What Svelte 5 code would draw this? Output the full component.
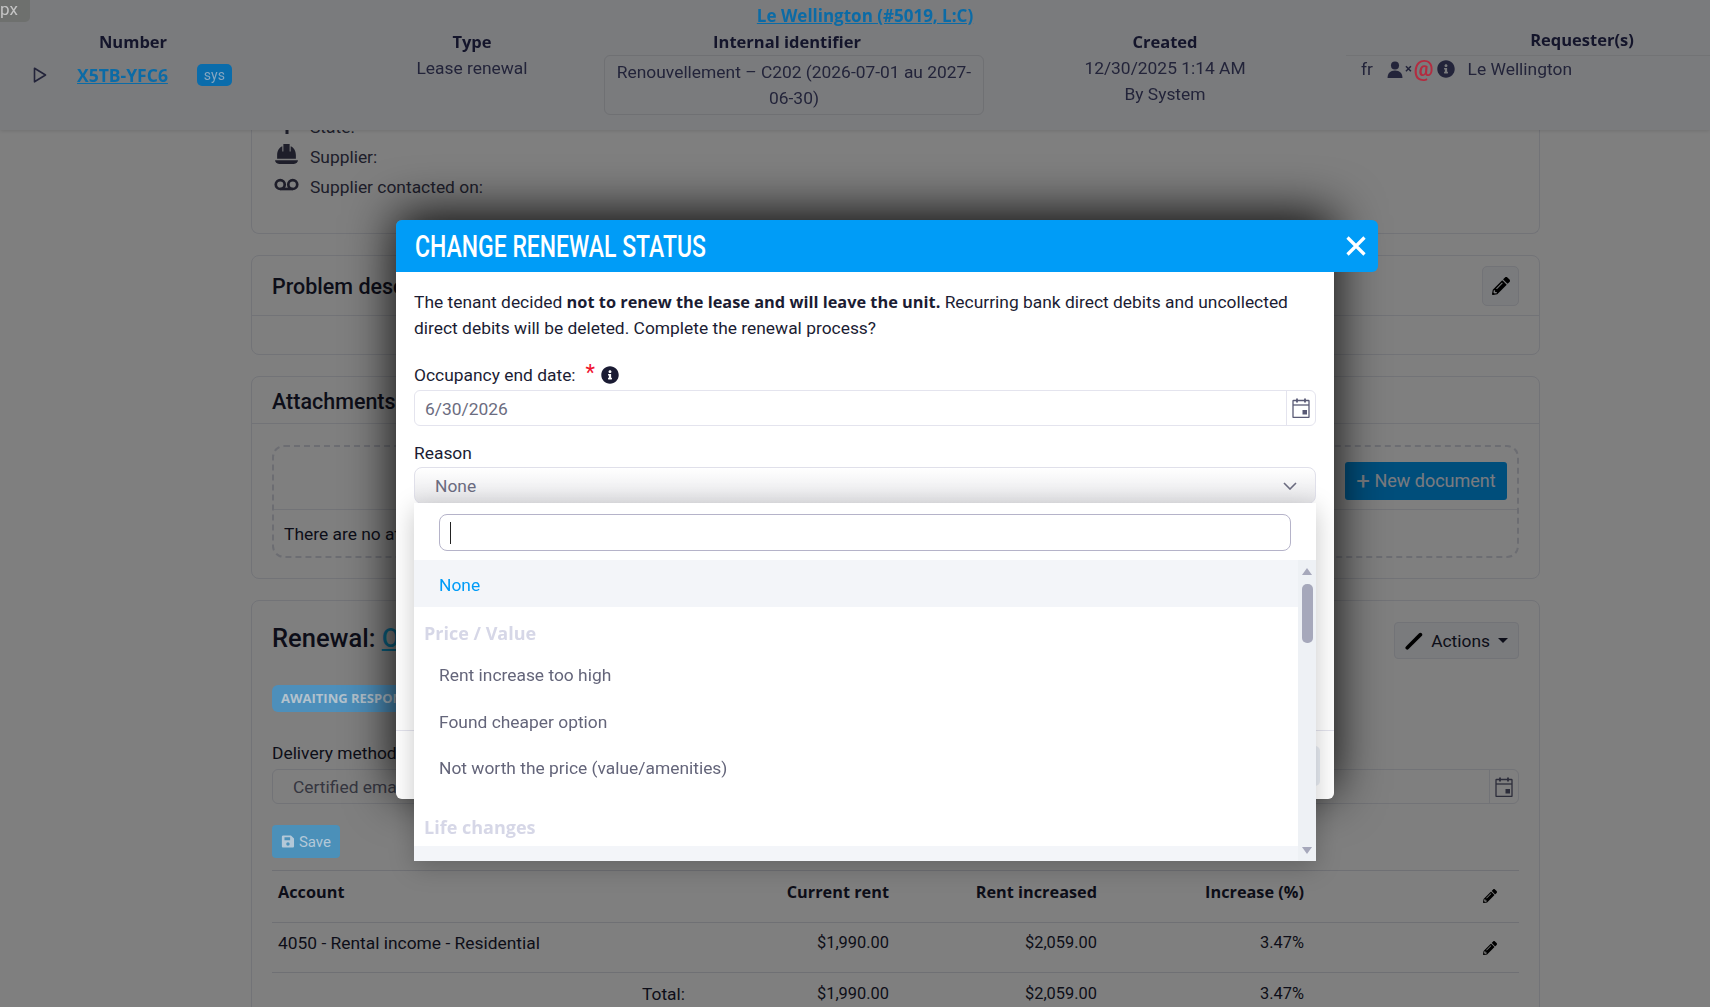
<script>
  const pencil = "M497.9 142.1l-46.1 46.1c-4.7 4.7-12.3 4.7-17 0l-111-111c-4.7-4.7-4.7-12.3 0-17l46.1-46.1c18.7-18.7 49.1-18.7 67.9 0l60.1 60.1c18.8 18.7 18.8 49.1 0 67.9zM284.2 99.8L21.6 362.4.4 483.9c-2.9 16.4 11.4 30.6 27.8 27.8l121.5-21.3 262.6-262.6c4.7-4.7 4.7-12.3 0-17l-111-111c-4.8-4.7-12.4-4.7-17.1 0zM124.1 339.9c-5.5-5.5-5.5-14.3 0-19.8l154-154c5.5-5.5 14.3-5.5 19.8 0s5.5 14.3 0 19.8l-154 154c-5.5 5.5-14.3 5.5-19.8 0zM88 424h48v36.3l-64.5 11.3-31.1-31.1L51.7 376H88v48z";
  const info = "M256 8C119.043 8 8 119.083 8 256c0 136.997 111.043 248 248 248s248-111.003 248-248C504 119.083 392.957 8 256 8zm0 110c23.196 0 42 18.804 42 42s-18.804 42-42 42-42-18.804-42-42 18.804-42 42-42zm56 254c0 6.627-5.373 12-12 12h-88c-6.627 0-12-5.373-12-12v-24c0-6.627 5.373-12 12-12h12v-64h-12c-6.627 0-12-5.373-12-12v-24c0-6.627 5.373-12 12-12h64c6.627 0 12 5.373 12 12v100h12c6.627 0 12 5.373 12 12v24z";
  const priceItems = ['Rent increase too high', 'Found cheaper option', 'Not worth the price (value/amenities)'];
</script>

{#snippet calendar()}
  <svg class="cal" viewBox="0 0 18 20" width="18" height="20" fill="none" stroke="currentColor" stroke-width="1.300">
    <rect x="1" y="2.500" width="16" height="17" rx="0.500" />
    <path d="M1 7h16" />
    <path d="M5 .5v4M13 .5v4" stroke-width="1.800" />
    <rect x="10.500" y="12" width="4.500" height="4.500" fill="currentColor" stroke="none" />
  </svg>
{/snippet}

{#snippet pencilIcon(size)}
  <svg viewBox="0 0 512 512" width={size} height={size} fill="currentColor"><path d={pencil} /></svg>
{/snippet}

<div class="page">
  <main class="content">
    <section class="card first">
      <div class="meta"><span class="meta-icon"><svg viewBox="0 0 24 24" width="24" height="24" fill="currentColor"><rect x="10.500" y="2" width="3" height="20" /></svg></span>State:</div>
      <div class="meta"><span class="meta-icon"><svg viewBox="0 0 24 22" width="25" height="23" fill="currentColor"><path d="M9 1h6v7h1V3c3 1.300 5 4.400 5 8.500V15H3v-3.500C3 7.400 5 4.300 8 3v5h1zM1 16.500h22c0 1.600-1.500 3.500-4 3.500H5c-2.500 0-4-1.900-4-3.500z" /></svg></span>Supplier:</div>
      <div class="meta"><span class="meta-icon"><svg viewBox="0 0 24 14" width="25" height="15" fill="none" stroke="currentColor" stroke-width="2.600"><circle cx="6" cy="7" r="4.300" /><circle cx="18" cy="7" r="4.300" /><path d="M6 11.300h12" /></svg></span>Supplier contacted on:</div>
    </section>

    <section class="card problem">
      <header class="card-head tall">
        <h3>Problem description</h3>
        <button class="icon-btn">{@render pencilIcon(18)}</button>
      </header>
    </section>

    <section class="card attachments">
      <header class="card-head"><h3>Attachments</h3></header>
      <div class="dropzone">
        <div class="drop-top">
          <button class="primary"><span class="plus">+</span> New document</button>
        </div>
        <div class="drop-text">There are no attachments</div>
      </div>
    </section>

    <section class="card renewal">
      <div class="renewal-head">
        <h2>Renewal: <a href="#top">Ongoing</a></h2>
        <button class="actions">
          <svg viewBox="0 0 20 20" width="20" height="20" fill="none" stroke="#000" stroke-width="4" stroke-linecap="round"><path d="M2.500 17.500 17 3" /></svg>
          Actions <i class="caret"></i>
        </button>
      </div>
      <span class="status">AWAITING RESPONSE</span>
      <div class="delivery">
        <div class="delivery-col">
          <label for="delivery">Delivery method</label>
          <input id="delivery" class="bg-input" value="Certified email" />
        </div>
        <div class="date-col">
          <div class="date-box"><span class="date-addon">{@render calendar()}</span></div>
        </div>
      </div>
      <button class="save">
        <svg viewBox="0 0 16 16" width="15" height="15" fill="currentColor"><path d="M1 2.500C1 1.700 1.700 1 2.500 1h9L15 4.500v9c0 .8-.7 1.500-1.500 1.500h-11C1.700 15 1 14.300 1 13.500zM4 3v3.500h6.500V3zm4 6a2 2 0 1 0 0 4 2 2 0 0 0 0-4z" fill-rule="evenodd" /></svg>
        Save
      </button>
      <div class="rent-table">
        <div class="rent-row head">
          <span>Account</span><span class="num">Current rent</span><span class="num">Rent increased</span><span class="num">Increase (%)</span>
          <span class="edit">{@render pencilIcon(14)}</span>
        </div>
        <div class="rent-row middle">
          <span>4050 - Rental income - Residential</span><span class="num">$1,990.00</span><span class="num">$2,059.00</span><span class="num">3.47%</span>
          <span class="edit">{@render pencilIcon(14)}</span>
        </div>
        <div class="rent-row">
          <span class="total">Total:</span><span class="num">$1,990.00</span><span class="num">$2,059.00</span><span class="num">3.47%</span>
        </div>
      </div>
    </section>
  </main>

  <header class="topbar">
    <div class="company"><a href="#top">Le Wellington (#5019, L:C)</a></div>
    <div class="cols">
      <div class="col">
        <div class="th">Number</div>
        <div class="number">
          <svg viewBox="0 0 14 16" width="14" height="16" fill="none" stroke="currentColor" stroke-width="1.600" stroke-linejoin="round"><path d="M1.500 1.200 12.500 8 1.500 14.800z" /></svg>
          <a href="#top">X5TB-YFC6</a>
          <span class="sys">sys</span>
        </div>
      </div>
      <div class="col type">
        <div class="th">Type</div>
        <div>Lease renewal</div>
      </div>
      <div class="col">
        <div class="th shift">Internal identifier</div>
        <div class="identifier">Renouvellement – C202 (2026-07-01 au 2027-06-30)</div>
      </div>
      <div class="col">
        <div class="th">Created</div>
        <div>12/30/2025 1:14 AM</div>
        <div>By System</div>
      </div>
      <div class="col requester">
        <div class="th req-head">Requester(s)</div>
        <div class="req-row">
          <span class="lang">fr</span>
          <span class="req-icons">
            <svg viewBox="0 0 15 16" width="16" height="17" fill="currentColor"><circle cx="7.500" cy="4.200" r="3.800" /><path d="M.5 16c0-4.300 2.500-7 7-7s7 2.700 7 7z" /></svg>
            <span class="x">×</span>
            <span class="at">@</span>
            <svg viewBox="0 0 512 512" width="18" height="18" fill="currentColor"><path d={info} /></svg>
          </span>
          <span>Le Wellington</span>
        </div>
      </div>
    </div>
    <span class="px">px</span>
  </header>

  <div class="backdrop"></div>

  <div class="modal" role="dialog" aria-modal="true">
    <div class="modal-title">
      <h1>CHANGE RENEWAL STATUS</h1>
      <svg viewBox="0 0 20 20" width="20" height="20" stroke="#fff" stroke-width="3.200"><path d="M1.500 1.500l17 17M18.500 1.500l-17 17" /></svg>
    </div>
    <div class="modal-body">
      <p>The tenant decided <b>not to renew the lease and will leave the unit.</b> Recurring bank direct debits and uncollected direct debits will be deleted. Complete the renewal process?</p>
      <div class="field-label">
        Occupancy end date: <span class="req">*</span>
        <svg viewBox="0 0 512 512" width="18" height="18" fill="#1a1b33"><path d={info} /></svg>
      </div>
      <div class="date-input">
        <span class="date-value">6/30/2026</span>
        <span class="addon">{@render calendar()}</span>
      </div>
      <div class="field-label reason">Reason</div>
      <div class="select">
        <span>None</span>
        <svg viewBox="0 0 14 8" width="14" height="8" fill="none" stroke="currentColor" stroke-width="1.600"><path d="M1 1l6 6 6-6" /></svg>
      </div>
      <div class="foot-space"></div>
      <div class="modal-foot"><span class="ghost-btn"></span></div>

      <div class="dropdown">
        <div class="search"><div class="search-box"><i class="text-caret"></i></div></div>
        <div class="list">
          <div class="options">
            <div class="option selected">None</div>
            <div class="group">Price / Value</div>
            {#each priceItems as item}
              <div class="option">{item}</div>
            {/each}
            <div class="group life">Life changes</div>
            <div class="tail"></div>
          </div>
          <div class="scrollbar">
            <i class="arrow up"></i>
            <i class="thumb"></i>
            <i class="arrow down"></i>
          </div>
        </div>
      </div>
    </div>
  </div>
</div>

<style>
  :global(body) {
    margin: 0;
    overflow: hidden;
    background: #fff;
    font-family: Roboto, "Liberation Sans", sans-serif;
    font-size: 17.4px;
    line-height: 26px;
    color: #1b1c33;
  }

  h1, h2, h3, p { margin: 0; }
  a { color: #14c0ff; }
  button { font: inherit; }
  b, .th, .group, .rent-row.head, .company, .number a, .status {
    font-family: "Open Sans", Roboto, sans-serif;
  }
  b { font-size: 16.350px; }

  .page { height: 1007px; overflow: hidden; }

  .content {
    width: 1289px;
    margin-left: 251px;
    display: flex;
    flex-direction: column;
    gap: 21px;
  }

  .card {
    border: 1px solid #e4e6ee;
    border-radius: 8px;
    box-sizing: border-box;
    flex: none;
  }

  .first { height: 235px; margin-top: -1px; padding: 113px 0 0 22px; border-top: 0; }
  .meta { display: flex; align-items: center; height: 30px; color: #3c3d55; gap: 11px; }
  .meta-icon { width: 25px; display: flex; justify-content: center; position: relative; top: -3px; }

  .card-head {
    display: flex;
    align-items: center;
    justify-content: space-between;
    height: 47px;
    box-sizing: border-box;
    padding: 0 20px;
    border-bottom: 1px solid #e4e6ee;
  }
  .card-head.tall { height: 60px; padding: 0 20px 0 20px; }
  .card-head h3 { font-size: 21.500px; font-weight: 500; position: relative; top: 1px; }
  .attachments .card-head h3 { top: 2px; }

  .icon-btn {
    width: 37px;
    height: 40px;
    padding: 0;
    display: flex;
    align-items: center;
    justify-content: center;
    background: #f4f6fa;
    border: 1px solid #e4e6ee;
    border-radius: 5px;
    color: #000;
  }

  .problem { height: 100px; }
  .attachments { height: 203px; padding: 0; }

  .dropzone {
    margin: 21px 20px 0;
    height: 113px;
    border: 2px dashed #d9dbe5;
    border-radius: 12px;
    box-sizing: border-box;
  }
  .drop-top {
    height: 63px;
    box-sizing: border-box;
    display: flex;
    justify-content: flex-end;
    align-items: center;
    padding: 5px 10px 0 0;
    border-bottom: 1px solid #e4e6ee;
  }
  .primary {
    height: 38px;
    width: 162px;
    padding: 0;
    border: 0;
    border-radius: 3px;
    background: #009cf7;
    color: #f2f6ff;
    font-size: 18px;
  }
  .plus { font-size: 24px; line-height: 20px; vertical-align: -2px; }
  .drop-text { padding: 11px 10px; }

  .renewal { padding: 21px 20px 0; height: 500px; }
  .renewal-head { display: flex; justify-content: space-between; align-items: center; height: 37px; }
  .renewal-head h2 { font-size: 25.500px; font-weight: 500; position: relative; top: -3px; }
  .actions {
    display: flex;
    align-items: center;
    gap: 8px;
    height: 37px;
    width: 125px;
    box-sizing: border-box;
    padding: 0 10px;
    background: #f4f6fa;
    border: 1px solid #e4e6ee;
    border-radius: 4px;
    color: #1b1c33;
    font-size: 17.400px;
    white-space: nowrap;
  }
  .caret { border: 5px solid transparent; border-top-color: #1b1c33; border-bottom: 0; }

  .status {
    display: block;
    position: relative;
    z-index: 2;
    width: 240px;
    margin-top: 26px;
    height: 27px;
    line-height: 27px;
    padding-left: 9px;
    background: #4d8fbb;
    border-radius: 6px;
    color: #b3c2cd;
    font-size: 13px;
    font-weight: 700;
  }

  .delivery { display: flex; gap: 20px; margin-top: 28px; }
  .delivery-col { flex: 1; }
  .delivery-col label { display: block; height: 29px; }
  .bg-input {
    display: block;
    width: 100%;
    height: 35px;
    box-sizing: border-box;
    padding: 0 20px;
    border: 1px solid #e4e6ee;
    border-radius: 6px;
    background: #fff;
    font: inherit;
    color: #6b6c80;
  }
  .date-col { flex: 1; padding-top: 29px; }
  .date-box {
    display: flex;
    justify-content: flex-end;
    height: 35px;
    box-sizing: border-box;
    border: 1px solid #e4e6ee;
    border-radius: 6px;
  }
  .date-addon {
    display: flex;
    align-items: center;
    justify-content: center;
    width: 28px;
    border-left: 1px solid #e4e6ee;
    color: #595a75;
  }

  .save {
    display: flex;
    position: relative;
    z-index: 2;
    align-items: center;
    gap: 4px;
    width: 68px;
    height: 33px;
    margin-top: 21px;
    padding: 0 9px;
    border: 0;
    border-radius: 4px;
    background: #4b90b9;
    color: #b3c8d8;
    font-size: 15px;
  }

  .rent-table { margin-top: 12px; }
  .rent-row {
    display: grid;
    grid-template-columns: 431px 186px 208px 207px 1fr;
    height: 51px;
    padding-top: 8px;
    box-sizing: border-box;
    border-top: 1px solid #dfe1e9;
  }
  .rent-row span:first-child { padding-left: 6px; }
  .rent-row.head { font-weight: 700; font-size: 16.300px; height: 52px; }
  .rent-row:not(.head) .num { font-size: 16.400px; }
  .rent-row.middle { padding-top: 7px; height: 50px; }
  .num { text-align: right; }
  .total { text-align: right; padding-right: 18px; }
  .edit { display: flex; justify-content: flex-end; padding: 10px 22px 0 0; color: #000; }
  .middle .edit { padding-top: 11px; }

  .topbar {
    position: fixed;
    top: 0;
    left: 0;
    right: 0;
    z-index: 2;
    height: 130px;
    padding-top: 3px;
    box-sizing: border-box;
    background: #7a7b7d;
    box-shadow: 0 1px 4px rgba(0, 0, 0, 0.12);
    text-align: center;
    color: #23243a;
  }
  .topbar a { color: #0b6ba6; }
  .company { height: 26px; padding-left: 20px; font-weight: 700; font-size: 17px; }
  .cols { display: grid; grid-template-columns: 266px 338px 380px 362px 1fr; }
  .th { font-weight: 700; font-size: 16.500px; height: 26px; color: #14152b; }
  .shift { padding-right: 14px; }
  .type { padding-left: 74px; }
  .number { display: flex; align-items: center; padding: 7px 0 0 33px; font-weight: 700; height: 26px; }
  .number a { margin-left: 30px; font-size: 17.500px; }
  .sys {
    margin-left: 29px;
    width: 35px;
    height: 22px;
    line-height: 22px;
    border-radius: 5px;
    background: #0a6cab;
    color: #86a6c0;
    font-size: 14px;
    font-weight: 400;
  }
  .identifier {
    height: 60px;
    box-sizing: border-box;
    padding: 3px 10px;
    border: 1px solid #6f7073;
    border-radius: 6px;
  }
  .req-head { padding-left: 108px; margin-top: -2px; height: 28px; text-align: center; }
  .req-row {
    display: flex;
    align-items: center;
    height: 26px;
    padding: 0 0 0 15px;
    border-top: 1px solid #727375;
  }
  .requester { text-align: left; }
  .lang { margin-right: 14px; }
  .req-icons { display: flex; align-items: center; gap: 2px; margin-right: 13px; }
  .x { font-size: 13px; font-weight: 700; }
  .at { color: #b32c40; font-weight: 700; font-size: 22px; margin-right: 1px; }
  .px {
    position: absolute;
    left: 0;
    top: 0;
    width: 30px;
    height: 22px;
    line-height: 18px;
    border-radius: 0 0 5px 0;
    background: #6e706e;
    color: #c4c4c4;
    font-size: 17px;
    text-align: left;
  }

  .backdrop { position: fixed; inset: 0; z-index: 1; background: rgba(0, 0, 0, 0.5); }

  .modal {
    position: fixed;
    z-index: 3;
    left: 396px;
    top: 220px;
    width: 938px;
  }
  .modal::before {
    content: "";
    position: absolute;
    inset: 0;
    z-index: -1;
    border-radius: 6px;
    box-shadow: 0 -6px 50px rgba(0, 0, 0, 0.92);
  }
  .modal-title {
    width: 982px;
    height: 52px;
    box-sizing: border-box;
    padding: 0 12px 0 19px;
    display: flex;
    align-items: center;
    justify-content: space-between;
    background: #009cf7;
    border-radius: 6px 6px 6px 0;
    color: #fff;
  }
  .modal-title h1 {
    font-size: 32px;
    font-weight: 500;
    line-height: 40px;
    white-space: nowrap;
    transform: scaleX(0.718);
    transform-origin: left center;
  }
  .modal-body {
    position: relative;
    height: 527px;
    box-sizing: border-box;
    padding: 17px 18px 0;
    background: #fff;
    border-radius: 0 0 6px 6px;
  }
  .field-label { margin-top: 20px; height: 28px; display: flex; align-items: center; gap: 4px; }
  .req { color: #f0142f; font-size: 22px; margin: 0 2px 0 6px; position: relative; top: -2px; }
  .reason { margin-top: 12px; height: 29px; }
  .date-input {
    display: flex;
    justify-content: space-between;
    height: 36px;
    margin-top: 1px;
    box-sizing: border-box;
    border: 1px solid #e4e4ee;
    border-radius: 6px;
    color: #6b6c80;
  }
  .date-value { padding: 5px 10px; }
  .addon {
    width: 28px;
    display: flex;
    align-items: center;
    justify-content: center;
    border-left: 1px solid #e4e4ee;
    color: #595a75;
  }
  .select {
    display: flex;
    align-items: center;
    justify-content: space-between;
    height: 37px;
    box-sizing: border-box;
    padding: 0 18px 0 20px;
    border: 1px solid #e0e0ea;
    border-radius: 8px;
    background: linear-gradient(#fff, #e6e6e9);
    color: #6b6c80;
  }
  .foot-space { height: 226px; }
  .modal-foot {
    height: 70px;
    border-top: 1px solid #e4e4ee;
    margin: 0 -18px;
    padding: 15px 14px 0;
    display: flex;
    justify-content: flex-end;
  }
  .ghost-btn { width: 40px; height: 40px; border-radius: 5px; background: #e9eef4; }

  .dropdown {
    position: absolute;
    left: 18px;
    top: 231px;
    width: 902px;
    height: 358px;
    background: #fff;
    box-shadow: 0 6px 24px rgba(0, 0, 0, 0.22);
    z-index: 2;
  }
  .search { height: 57px; box-sizing: border-box; padding: 11px 25px 0; }
  .search-box {
    height: 37px;
    box-sizing: border-box;
    border: 1px solid #b5b3c9;
    border-radius: 8px;
    padding: 7px 10px;
  }
  .text-caret { display: block; width: 1px; height: 22px; background: #222; }

  .list { display: flex; height: 301px; }
  .options { flex: 1; overflow: hidden; display: flex; flex-direction: column; }
  .option {
    height: 46px;
    line-height: 45px;
    padding-left: 25px;
    color: #64657a;
    flex: none;
  }
  .option + .option { line-height: 47px; }
  .option.selected { height: 47px; line-height: 51px; background: #f3f5f9; color: #009cf7; }
  .group { padding: 13px 0 0 10px; height: 46px; box-sizing: border-box; color: #d6d7e7; font-weight: 700; font-size: 18px; flex: none; }
  .life { height: 55px; padding-top: 23px; }
  .tail { flex: 1; background: #f3f5f9; }

  .scrollbar {
    width: 18px;
    background: #eef1f5;
    display: flex;
    flex-direction: column;
    align-items: center;
    position: relative;
  }
  .arrow { position: absolute; border: 5px solid transparent; }
  .arrow.up { top: 8px; border-top: 0; border-bottom: 7px solid #a6a8bb; }
  .arrow.down { bottom: 7px; border-bottom: 0; border-top: 7px solid #a6a8bb; }
  .thumb { position: absolute; top: 24px; width: 11px; height: 59px; border-radius: 5px; background: #a6a8bb; }
</style>
